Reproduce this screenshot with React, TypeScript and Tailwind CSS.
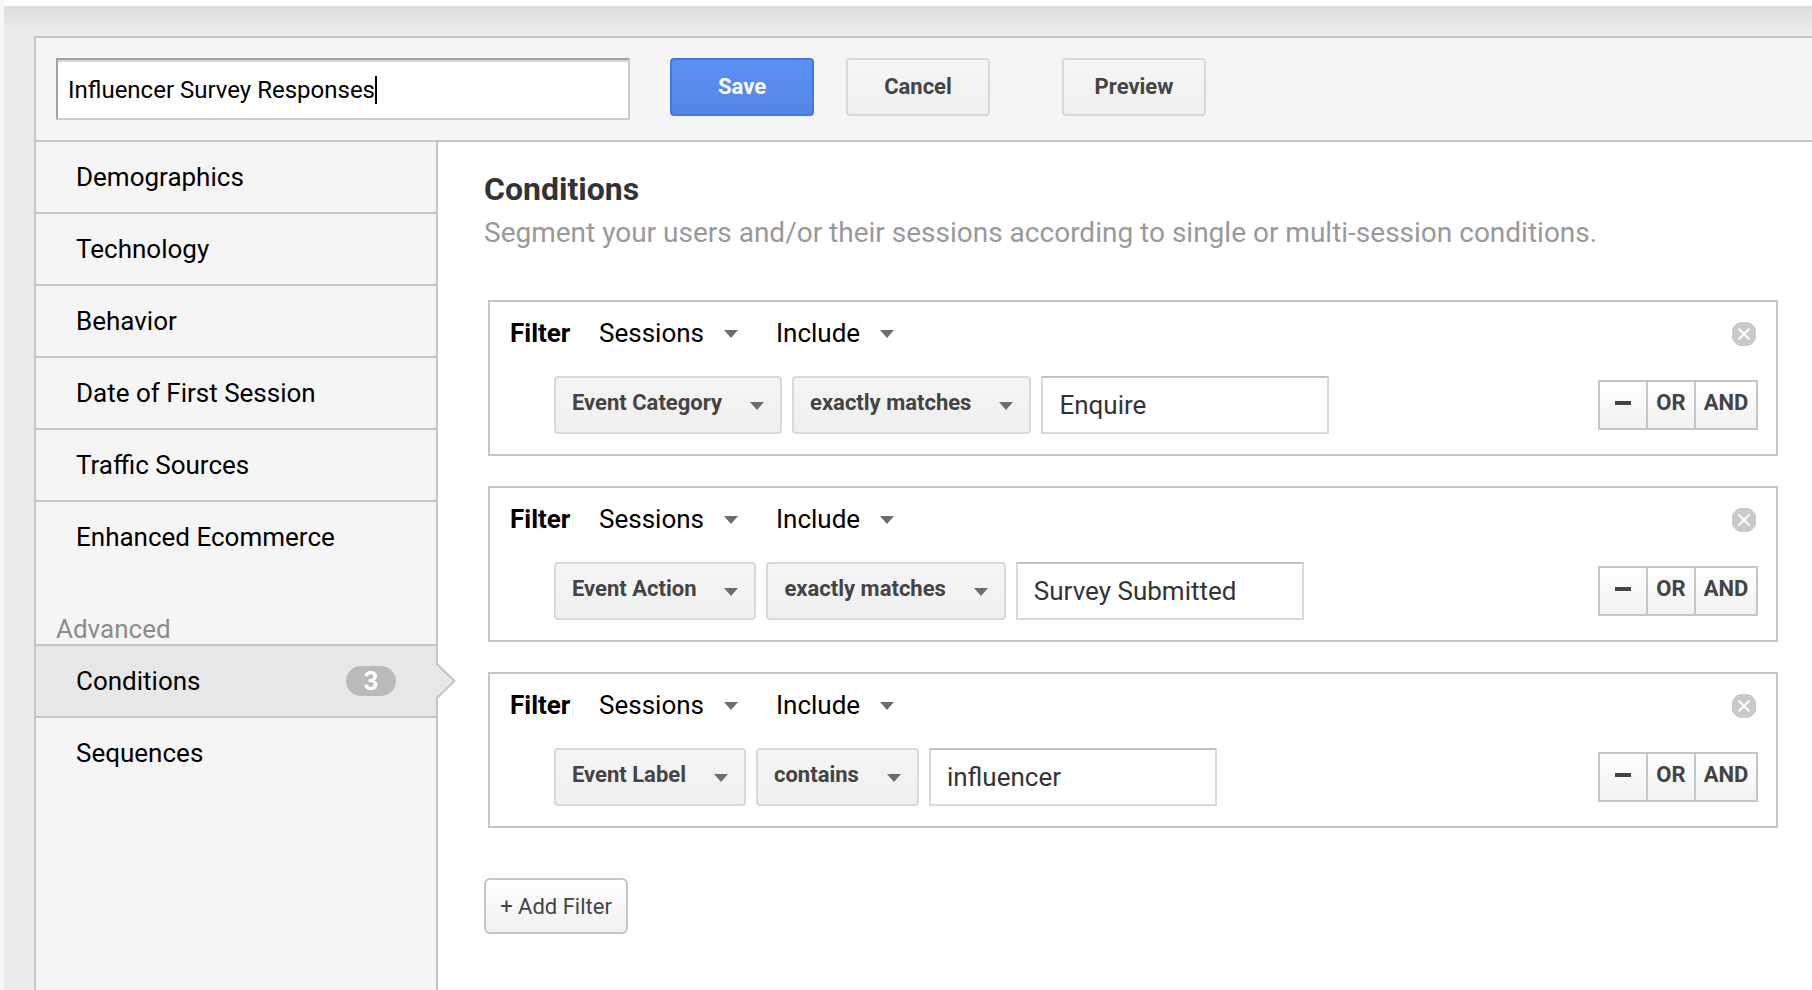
import React from "react";

const sections = [
  "Demographics",
  "Technology",
  "Behavior",
  "Date of First Session",
  "Traffic Sources",
  "Enhanced Ecommerce",
];

const filters = [
  { dimension: "Event Category", match: "exactly matches", value: "Enquire" },
  { dimension: "Event Action", match: "exactly matches", value: "Survey Submitted" },
  { dimension: "Event Label", match: "contains", value: "influencer" },
];

function Arrow({ className }: { className: string }) {
  return (
    <svg viewBox="0 0 14 8" className={`pointer-events-none absolute h-2 w-3.5 ${className}`} aria-hidden="true">
      <path d="M0 0h14L7 8z" fill="#6d6d6d" />
    </svg>
  );
}

function PlainSelect({ label, value }: { label: string; value: string }) {
  return (
    <div className="relative">
      <select
        aria-label={label}
        className="field-sizing-content h-10 appearance-none bg-transparent pb-0.5 pr-[34px] text-[26px] leading-[38px] text-black"
      >
        <option>{value}</option>
      </select>
      <Arrow className="right-0 top-4" />
    </div>
  );
}

function ButtonSelect({ label, value }: { label: string; value: string }) {
  return (
    <div className="relative">
      <select
        aria-label={label}
        className="field-sizing-content h-[58px] appearance-none rounded-[4px] border-2 border-[#d9d9d9] bg-linear-to-b from-[#f5f5f5] to-[#efefef] pb-1.5 pl-4 pr-[58px] text-[22px] font-bold text-[#444]"
      >
        <option>{value}</option>
      </select>
      <Arrow className="right-[18px] top-[26px]" />
    </div>
  );
}

function Filter({ dimension, match, value }: { dimension: string; match: string; value: string }) {
  return (
    <section className="border-2 border-[#c6c6c6] pb-5 pl-5 pr-[18px] pt-3">
      <div className="flex h-10 items-center">
        <h3 className="h-10 w-[89px] text-[26px] font-bold leading-[38px] text-black">Filter</h3>
        <div className="flex gap-[38px]">
          <PlainSelect label="Filter scope" value="Sessions" />
          <PlainSelect label="Filter mode" value="Include" />
        </div>
        <button type="button" aria-label="Remove filter" className="ml-auto mr-0.5">
          <svg viewBox="0 0 24 24" className="size-6">
            <circle cx="12" cy="12" r="12.8" fill="#c9c9c9" />
            <path d="M6.5 6.5l11 11M17.5 6.5l-11 11" stroke="#f8f8f8" strokeWidth="2.4" />
          </svg>
        </button>
      </div>
      <div className="mt-[22px] flex items-center gap-2.5 pl-11">
        <ButtonSelect label="Dimension" value={dimension} />
        <ButtonSelect label="Match type" value={match} />
        <input
          aria-label="Value"
          defaultValue={value}
          className="h-[58px] w-72 border-2 border-[#d9d9d9] border-t-[#c0c0c0] bg-white px-4 text-[26px] text-[#333]"
        />
        <div className="ml-auto flex h-[50px] divide-x-2 divide-[#c6c6c6] border-2 border-[#c6c6c6] bg-linear-to-b from-white to-[#f1f1f1] text-[22px] font-bold text-[#444]">
          <button type="button" aria-label="Remove condition" className="flex w-12 items-center justify-center pb-1">
            <span className="h-1 w-4 bg-[#444]" />
          </button>
          <button type="button" className="w-12 pb-1.5">OR</button>
          <button type="button" className="w-[60px] pb-1.5">AND</button>
        </div>
      </div>
    </section>
  );
}

const actionButton = "h-[58px] w-36 rounded-[4px] border-2 pb-0.5 text-[22px] font-bold";
const greyButton = "border-[#d9d9d9] bg-linear-to-b from-[#f5f5f5] to-[#f0f0f0] text-[#444]";

export default function App() {
  return (
    <div className="flex min-h-screen flex-col border-l-4 border-[#f5f7f9] bg-[#ebebeb] font-[Roboto,sans-serif]">
      <div className="h-1.5 bg-white" />
      <div className="flex flex-1 flex-col bg-linear-to-b from-[#dcdcdc] to-[#ebebeb] to-[24px] pl-[30px] pt-[30px]">
        <div className="flex flex-1 flex-col border-l-2 border-t-2 border-[#c6c6c6] bg-[#f5f5f5]">
          <header className="flex items-start border-b-2 border-[#c6c6c6] px-5 py-5">
            <div className="mr-10 flex h-[62px] w-[574px] items-center border-2 border-b-[#ccc] border-l-[#a2a2a2] border-r-[#ccc] border-t-[#a2a2a2] bg-white pl-2.5 pt-0.5 shadow-[inset_0_2px_0_#d9d9d9]">
              <input
                aria-label="Segment name"
                defaultValue="Influencer Survey Responses"
                className="field-sizing-content bg-transparent text-2xl text-black outline-none"
              />
              <span className="h-7 w-0.5 bg-black" />
            </div>
            <button type="button" className={`${actionButton} border-[#3f79e8] bg-linear-to-b from-[#5b90f7] to-[#5586e4] text-white`}>
              Save
            </button>
            <button type="button" className={`${actionButton} ${greyButton} ml-8`}>Cancel</button>
            <button type="button" className={`${actionButton} ${greyButton} ml-18`}>Preview</button>
          </header>
          <div className="flex flex-1">
            <nav className="w-[402px] shrink-0 border-r-2 border-[#c6c6c6] text-[26px] text-black">
              <ul className="divide-y-2 divide-[#c6c6c6]">
                {sections.map((name) => (
                  <li key={name}>
                    <a href="#" className="flex h-[70px] items-center pl-10">{name}</a>
                  </li>
                ))}
              </ul>
              <h2 className="mt-[42px] h-[30px] pl-5 leading-[30px] text-[#8c8c8c]">Advanced</h2>
              <ul>
                <li className="relative border-y-2 border-[#c6c6c6] bg-[#e7e7e7]">
                  <a href="#" aria-current="page" className="flex h-[70px] items-center justify-between pl-10 pr-10">
                    Conditions
                    <span className="h-[30px] w-[50px] rounded-full bg-[#bababa] text-center font-bold leading-[30px] text-white">3</span>
                  </a>
                  <svg viewBox="0 0 20 38" className="absolute -right-5 top-4 h-[38px] w-5" aria-hidden="true">
                    <path d="M0 1l18.5 18L0 37z" fill="#e7e7e7" />
                    <path d="M0 1l18.5 18L0 37" fill="none" stroke="#c6c6c6" strokeWidth="2" />
                  </svg>
                </li>
                <li>
                  <a href="#" className="flex h-[70px] items-center pl-10">Sequences</a>
                </li>
              </ul>
            </nav>
            <main className="min-w-0 flex-1 bg-white pb-14 pl-[46px] pr-[34px] pt-[27px]">
              <h1 className="text-[32px] font-bold leading-10 text-[#333]">Conditions</h1>
              <p className="mt-1 text-[28px] leading-10 text-[#999]">
                Segment your users and/or their sessions according to single or multi-session conditions.
              </p>
              <div className="ml-1 mt-[47px] flex flex-col gap-[30px]">
                {filters.map((filter) => (
                  <Filter key={filter.dimension} {...filter} />
                ))}
              </div>
              <button
                type="button"
                className="mt-[50px] h-14 w-36 rounded-md border-2 border-[#c6c6c6] bg-linear-to-b from-white to-[#f1f1f1] text-[22px] text-[#444]"
              >
                + Add Filter
              </button>
            </main>
          </div>
        </div>
      </div>
    </div>
  );
}
